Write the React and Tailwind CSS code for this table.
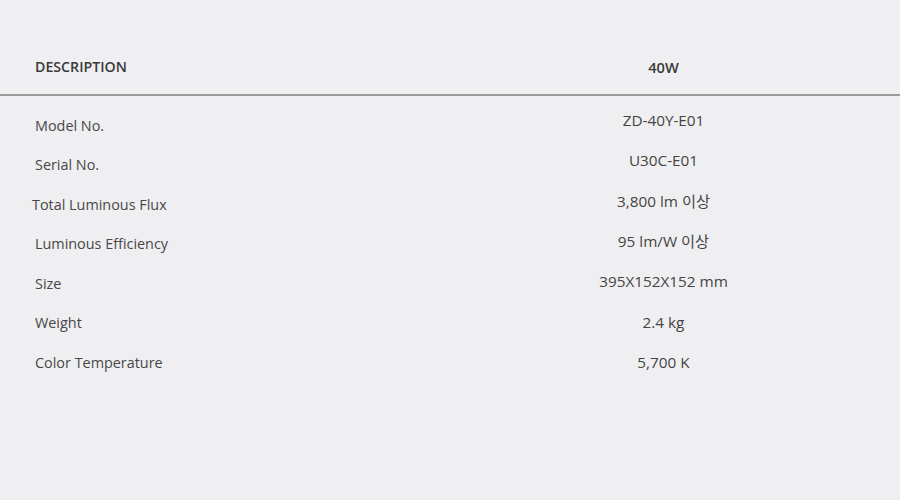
import React from "react";

const left = [
  ["Model No.", ""],
  ["Serial No.", ""],
  ["Total Luminous Flux", "-ml-[3px]"],
  ["Luminous Efficiency", ""],
  ["Size", ""],
  ["Weight", ""],
  ["Color Temperature", ""],
];
const right = [
  "ZD-40Y-E01",
  "U30C-E01",
  "3,800 lm 이상",
  "95 lm/W 이상",
  "395X152X152 mm",
  "2.4 kg",
  "5,700 K",
];

export default function App() {
  return (
    <div
      className="w-[900px] h-[500px] bg-[#efeff1]"
      style={{ fontFamily: '"Open Sans", "Noto Sans CJK KR", sans-serif' }}
    >
      <div className="flex h-[96px] items-start pt-[55px] border-b-2 border-[#9b9b9b]">
        <div className="w-[427px] pl-[35px] leading-[24px] font-semibold text-[#3a3a3a] text-[14.2px]">
          DESCRIPTION
        </div>
        <div className="flex-1 text-center leading-[24px] font-semibold text-[#3a3a3a] text-[14.6px]">
          40W
        </div>
      </div>
      <div className="flex">
        <div className="w-[427px] pl-[35px] pt-[10px] flex flex-col text-[#474747] text-[14.4px]">
          {left.map(([t, c]) => (
            <div key={t} className={"h-[39.5px] flex items-center leading-[24px] " + c}>
              {t}
            </div>
          ))}
        </div>
        <div className="flex-1 pt-[4px] flex flex-col text-[#444444] text-[15.3px]">
          {right.map((t) => (
            <div key={t} className="h-[40.3px] flex items-center justify-center leading-[24px]">
              {t}
            </div>
          ))}
        </div>
      </div>
    </div>
  );
}
